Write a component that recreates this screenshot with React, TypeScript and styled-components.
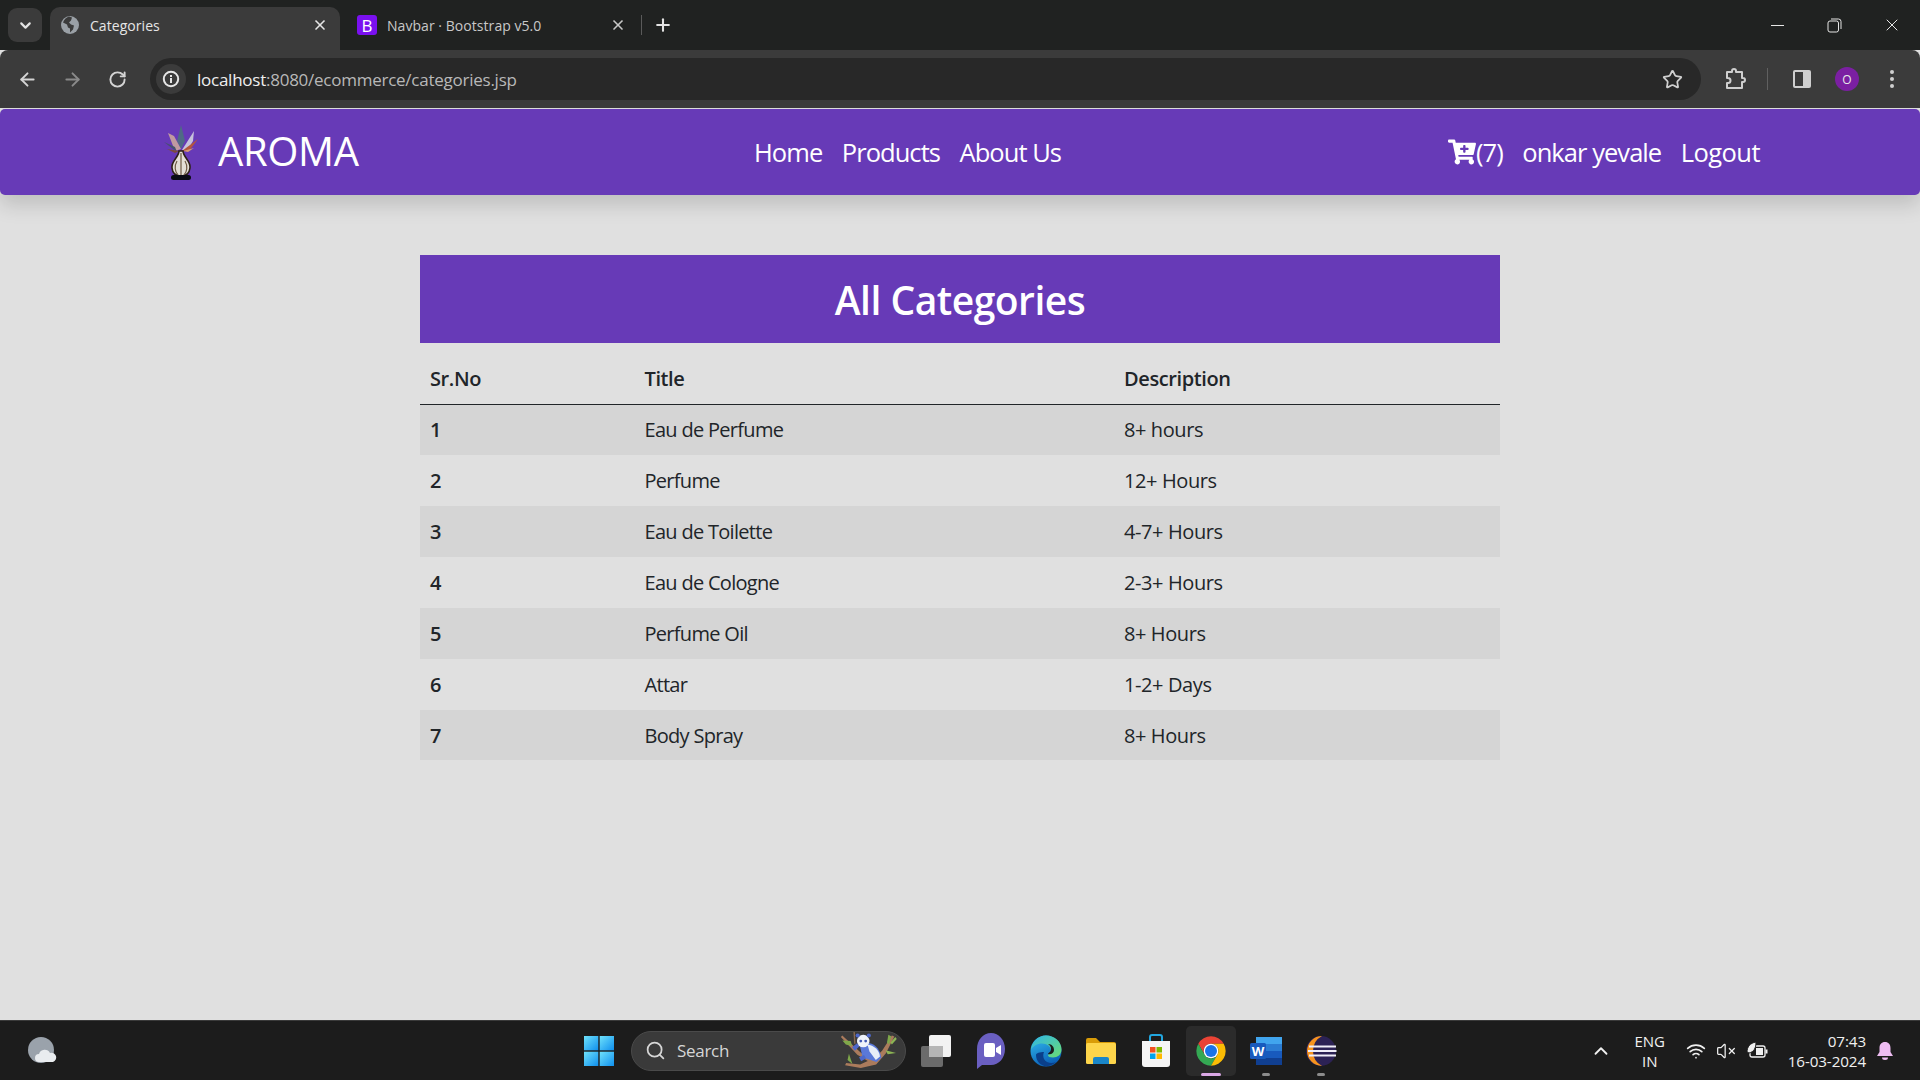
import React from 'react';
import styled, { createGlobalStyle } from 'styled-components';
import { FaCartPlus } from 'react-icons/fa';
import {
  ArrowLeft,
  ArrowRight,
  ChevronDown,
  ChevronUp,
  Plus,
  RotateCw,
  Search,
  Star,
  VolumeX,
  Wifi,
  X,
} from 'lucide-react';

const categories = [
  { id: 1, title: 'Eau de Perfume', description: '8+ hours' },
  { id: 2, title: 'Perfume', description: '12+ Hours' },
  { id: 3, title: 'Eau de Toilette', description: '4-7+ Hours' },
  { id: 4, title: 'Eau de Cologne', description: '2-3+ Hours' },
  { id: 5, title: 'Perfume Oil', description: '8+ Hours' },
  { id: 6, title: 'Attar', description: '1-2+ Days' },
  { id: 7, title: 'Body Spray', description: '8+ Hours' },
];

const GlobalStyle = createGlobalStyle`
  html, body {
    margin: 0;
    padding: 0;
    height: 100%;
    background: #e0e0e0;
    overflow: hidden;
  }
  * {
    box-sizing: border-box;
  }
  body {
    font-family: "Open Sans", "Noto Sans", "Liberation Sans", sans-serif;
  }
`;

const Screen = styled.div`
  display: flex;
  flex-direction: column;
  width: 1920px;
  height: 1080px;
`;

/* browser chrome */
const TabStrip = styled.div`
  display: flex;
  align-items: flex-end;
  height: 50px;
  background: #202221;
  padding-left: 8px;
  flex-shrink: 0;
`;

const TabSearch = styled.div`
  display: flex;
  align-items: center;
  justify-content: center;
  width: 34px;
  height: 34px;
  margin-bottom: 8px;
  border-radius: 9px;
  background: #3b3b3b;
  color: #e3e3e3;
`;

const Tab = styled.div<{ $active?: boolean }>`
  display: flex;
  align-items: center;
  width: ${(p) => (p.$active ? '290px' : '301px')};
  height: 43px;
  margin-left: ${(p) => (p.$active ? '8px' : '0')};
  padding: ${(p) => (p.$active ? '0 12px 7px 10px' : '0 15px 7px 17px')};
  border-radius: 10px 10px 0 0;
  background: ${(p) => (p.$active ? '#3b3b3b' : 'transparent')};
  color: ${(p) => (p.$active ? '#e6e6e6' : '#c8c8c8')};
`;

const TabFavicon = styled.div`
  display: flex;
  width: 20px;
  height: 20px;
  margin-right: 10px;
  flex-shrink: 0;
`;

const BootstrapMark = styled.div`
  display: flex;
  align-items: center;
  justify-content: center;
  width: 20px;
  height: 20px;
  border-radius: 3px;
  background: #7a10f0;
  color: #fff;
  font-size: 17px;
  font-weight: 400;
`;

const TabTitle = styled.span`
  flex: 1;
  font-size: 14px;
  letter-spacing: 0.05px;
  white-space: nowrap;
`;

const TabDivider = styled.div`
  width: 1px;
  height: 20px;
  margin: 0 11px 15px 0;
  background: #5a5a5a;
`;

const NewTab = styled.div`
  display: flex;
  height: 43px;
  align-items: center;
  padding-bottom: 7px;
  color: #e3e3e3;
`;

const WindowControls = styled.div`
  display: flex;
  align-items: center;
  margin-left: auto;
  height: 50px;
  color: #e6e6e6;
`;

const WindowButton = styled.div`
  display: flex;
  align-items: center;
  justify-content: center;
  width: 57px;
  height: 50px;
`;

const MinimizeBar = styled.div`
  width: 13px;
  height: 1px;
  background: #e6e6e6;
`;

const Toolbar = styled.div`
  display: flex;
  align-items: center;
  height: 58px;
  padding: 0 0 0 9px;
  border-radius: 8px 8px 0 0;
  background: #3b3b3b;
  flex-shrink: 0;
`;

const NavIcon = styled.div<{ $dim?: boolean }>`
  display: flex;
  align-items: center;
  justify-content: center;
  width: 36px;
  height: 36px;
  margin-right: 9px;
  color: ${(p) => (p.$dim ? '#8a8a8a' : '#d4d4d4')};
`;

const Omnibox = styled.div`
  display: flex;
  align-items: center;
  width: 1551px;
  height: 42px;
  margin-left: 6px;
  padding: 0 18px 0 6px;
  border-radius: 21px;
  background: #282828;
`;

const InfoChip = styled.div`
  display: flex;
  align-items: center;
  justify-content: center;
  width: 30px;
  height: 30px;
  border-radius: 50%;
  background: #3b3b3b;
`;

const Url = styled.div`
  flex: 1;
  margin-left: 11px;
  font-size: 17px;
  letter-spacing: -0.25px;
  color: #b8b8b8;
`;

const UrlHost = styled.span`
  color: #efefef;
`;

const ToolbarRight = styled.div`
  display: flex;
  align-items: center;
  margin-left: 22px;
  color: #cfcfcf;
`;

const ToolbarSeparator = styled.div`
  width: 1px;
  height: 22px;
  margin: 0 24px 0 20px;
  background: #606060;
`;

const Avatar = styled.div`
  display: flex;
  align-items: center;
  justify-content: center;
  width: 24px;
  height: 24px;
  margin-left: 23px;
  border-radius: 50%;
  background: #7b1fa2;
  color: #e8e8e8;
  font-size: 12px;
`;

const MenuDots = styled.div`
  display: flex;
  flex-direction: column;
  gap: 3px;
  margin-left: 31px;
`;

const Dot = styled.div`
  width: 4px;
  height: 4px;
  border-radius: 50%;
  background: #cfcfcf;
`;

/* page */
const Page = styled.div`
  flex: 1;
  background: #e0e0e0;
  padding-top: 1px;
`;

const Navbar = styled.nav`
  display: grid;
  grid-template-columns: 754px 1fr auto;
  align-items: center;
  height: 86px;
  padding-right: 160px;
  border-radius: 5px;
  background: #673ab7;
  box-shadow: 0 10px 20px rgba(0, 0, 0, 0.15);
  color: #fff;
`;

const Brand = styled.div`
  display: flex;
  align-items: center;
  padding-left: 163px;
`;

const BrandName = styled.span`
  margin-left: 19px;
  margin-top: -4px;
  font-size: 40px;
  letter-spacing: -0.35px;
`;

const NavLinks = styled.div`
  display: flex;
  align-items: center;
  gap: 19.5px;
`;

const NavLink = styled.span`
  font-size: 25.5px;
  letter-spacing: -0.95px;
  white-space: nowrap;
`;

const LogoutLink = styled(NavLink)`
  letter-spacing: -0.55px;
`;

const CartLink = styled(NavLink)`
  display: flex;
  align-items: center;
`;

const Content = styled.main`
  width: 1080px;
  margin: 60px auto 0;
`;

const Heading = styled.h1`
  display: flex;
  align-items: center;
  justify-content: center;
  height: 88px;
  margin: 0;
  background: #673ab7;
  color: #fff;
  font-size: 39px;
  font-weight: 600;
  letter-spacing: -0.5px;
`;

const Table = styled.table`
  width: 100%;
  border-collapse: collapse;
  table-layout: fixed;
  color: #212529;
  font-size: 20px;
  letter-spacing: -0.4px;
`;

const HeadCell = styled.th<{ $width?: number }>`
  width: ${(p) => (p.$width ? `${p.$width}px` : 'auto')};
  height: 61px;
  padding: 10px 10px 0;
  border-bottom: 1px solid #212529;
  text-align: left;
  font-weight: 600;
`;

const Row = styled.tr<{ $striped?: boolean }>`
  background: ${(p) => (p.$striped ? '#d5d5d5' : 'transparent')};

  &:last-child td {
    height: 50px;
  }
`;

const Cell = styled.td`
  height: 51px;
  padding: 0 10px;
  font-weight: 400;
`;

const NumberCell = styled(Cell)`
  font-weight: 600;
`;

const TitleCell = styled(Cell)`
  letter-spacing: -0.7px;
`;

/* windows taskbar */
const Taskbar = styled.footer`
  display: grid;
  grid-template-columns: 574px 1fr auto;
  align-items: center;
  height: 60px;
  border-top: 1px solid #3a3a3a;
  background: #1c1c1c;
  flex-shrink: 0;
`;

const WeatherSlot = styled.div`
  display: flex;
  padding-left: 28px;
`;

const TaskCenter = styled.div`
  display: flex;
  align-items: center;
  gap: 5px;
`;

const TaskSlot = styled.div<{ $active?: boolean }>`
  position: relative;
  display: flex;
  align-items: center;
  justify-content: center;
  width: 50px;
  height: 50px;
  border-radius: 5px;
  background: ${(p) => (p.$active ? '#2b2b2b' : 'transparent')};
`;

const RunningMark = styled.div<{ $active?: boolean }>`
  position: absolute;
  bottom: 0;
  left: 50%;
  width: ${(p) => (p.$active ? '20px' : '8px')};
  height: 3px;
  border-radius: 2px;
  transform: translateX(-50%);
  background: ${(p) => (p.$active ? '#dba8e6' : '#8c8c8c')};
`;

const SearchPill = styled.div`
  display: flex;
  align-items: center;
  width: 275px;
  height: 40px;
  margin: 0 0 0 2px;
  padding: 0 7px 0 13px;
  border-radius: 20px;
  border: 1px solid #4a4a4a;
  background: #3a3a3a;
  color: #d6d6d6;
`;

const SearchLabel = styled.span`
  flex: 1;
  margin-left: 11px;
  font-size: 17px;
  letter-spacing: -0.3px;
`;

const Tray = styled.div`
  display: flex;
  align-items: center;
  padding-right: 26px;
  color: #f0f0f0;
`;

const Lang = styled.div`
  display: flex;
  flex-direction: column;
  align-items: center;
  width: 40px;
  margin: 0 16px 0 18px;
  font-size: 15px;
  line-height: 20px;
`;

const TrayIcons = styled.div`
  display: flex;
  align-items: center;
  gap: 10px;
`;

const Clock = styled.div`
  display: flex;
  flex-direction: column;
  align-items: flex-end;
  margin: 0 10px 0 20px;
  font-size: 15.2px;
  line-height: 20px;
  letter-spacing: -0.1px;
`;

const GlobeIcon = () => (
  <svg width="20" height="20" viewBox="0 0 20 20">
    <circle cx="10" cy="10" r="9" fill="#9aa0a6" />
    <path d="M9 1.5c-3 1-5 3-6 6l4 2 1 3 2 1 0 4 3-3 1-4-3-1-2-2 2-2 1-3z" fill="#3b3b3b" />
  </svg>
);

const InfoIcon = () => (
  <svg width="18" height="18" viewBox="0 0 18 18" fill="none">
    <circle cx="9" cy="9" r="7.2" stroke="#e6e6e6" strokeWidth="2" />
    <rect x="8" y="8" width="2" height="5" fill="#e6e6e6" />
    <rect x="8" y="5" width="2" height="2" fill="#e6e6e6" />
  </svg>
);

const RestoreIcon = () => (
  <svg width="15" height="15" viewBox="0 0 15 15" fill="none" stroke="#e6e6e6" strokeWidth="1">
    <rect x="1" y="3" width="10.5" height="11" rx="2" />
    <path d="M4 1h7.5a2.5 2.5 0 0 1 2.5 2.5V11" />
  </svg>
);

const PuzzleIcon = () => (
  <svg width="24" height="24" viewBox="0 0 24 24" fill="none" stroke="#cfcfcf" strokeWidth="2" strokeLinejoin="round">
    <path d="M4 5h5V4a2 2 0 0 1 4 0v1h6v6h1a2 2 0 0 1 0 4h-1v6H4v-5h1a2.5 2.5 0 0 0 0-5H4z" />
  </svg>
);

const SidePanelIcon = () => (
  <svg width="20" height="20" viewBox="0 0 20 20">
    <rect x="1" y="1" width="18" height="18" rx="2" fill="#cfcfcf" />
    <rect x="3" y="3" width="8" height="14" fill="#3b3b3b" />
  </svg>
);

const VaseLogo = () => (
  <svg width="36" height="58" viewBox="0 0 36 58">
    <path d="M18 2l-4 16 4 8 4-8z" fill="#4f6a85" />
    <path d="M5 10l7 18 6-2-7-13z" fill="#c09aa0" />
    <path d="M31 8l-12 19 5 1 6-10z" fill="#c7c2dc" />
    <path d="M1 19l13 10-2-5z" fill="#45526e" />
    <path d="M35 16l-16 12 7 0z" fill="#b5563c" />
    <path d="M4 26l12 2-4 2z" fill="#7d4b3d" />
    <path d="M31 25l-11 3 5 1z" fill="#d49a74" />
    <path d="M16 28h4c0 6 8 10 7 17-.6 5-4 8-9 8s-8.500-3-9-8c-1-7 7-11 7-17z" fill="#e4dfd6" stroke="#2e2018" strokeWidth="1.600" />
    <path d="M18 30v22M14 38c-3 5-2 11 1 14M22 38c3 5 2 11-1 14" stroke="#6f5a44" strokeWidth="1.200" fill="none" />
    <rect x="8" y="52" width="20" height="5" rx="2.500" fill="#0b0b14" />
  </svg>
);

const WeatherIcon = () => (
  <svg width="30" height="28" viewBox="0 0 30 28">
    <circle cx="13" cy="13" r="13" fill="#9aa2ab" />
    <path d="M11 25a4 4 0 0 1 0-8 6 6 0 0 1 11-1 4.500 4.500 0 0 1 3 9z" fill="#e9ecef" />
  </svg>
);

const StartIcon = () => (
  <svg width="30" height="30" viewBox="0 0 30 30">
    <defs>
      <linearGradient id="startFill" x1="0" y1="0" x2="1" y2="1">
        <stop offset="0" stopColor="#6fe2fb" />
        <stop offset="1" stopColor="#0f8fee" />
      </linearGradient>
    </defs>
    <rect x="0" y="0" width="14.300" height="14.300" fill="url(#startFill)" />
    <rect x="15.700" y="0" width="14.300" height="14.300" fill="url(#startFill)" />
    <rect x="0" y="15.700" width="14.300" height="14.300" fill="url(#startFill)" />
    <rect x="15.700" y="15.700" width="14.300" height="14.300" fill="url(#startFill)" />
  </svg>
);

const PandaArt = () => (
  <svg width="58" height="37" viewBox="0 0 165 106">
    <path d="M38 0l4 0 2 34-4 0z" fill="#8a6a50" />
    <path d="M6 10l54 50 34 18 26-24 28-44 7 3-24 48-28 32-44 10-45-8 3-6 40 4 22-10-30-18L2 14z" fill="#ab7b5c" />
    <path d="M6 24l24 2 4 14-18-4z" fill="#7fa84a" />
    <path d="M25 62l10 30-14-12z" fill="#7fa84a" />
    <path d="M138 8l8 4-6 24-6-6z" fill="#7fa84a" />
    <path d="M158 14l4 6-14 16-4-6z" fill="#8db554" />
    <path d="M130 52l30 8-24 4z" fill="#8db554" />
    <path d="M56 38c20-16 56-4 62 36l-14 12-40-14z" fill="#5a78d8" />
    <path d="M78 36c18 2 34 16 36 34l-12 10-18-24z" fill="#e8eef8" />
    <path d="M54 72l14-6 6 10-14 8z" fill="#4e68c8" />
    <path d="M34 44l14-12 8 8-14 14z" fill="#4e68c8" />
    <circle cx="66" cy="26" r="18" fill="#eef2fa" />
    <circle cx="50" cy="10" r="6" fill="#4e68c8" />
    <circle cx="82" cy="10" r="6" fill="#4e68c8" />
    <circle cx="59" cy="26" r="4" fill="#4058b4" />
    <circle cx="73" cy="26" r="4" fill="#4058b4" />
  </svg>
);

const TaskViewIcon = () => (
  <svg width="32" height="34" viewBox="0 0 32 34">
    <rect x="9" y="1" width="22" height="22" rx="2" fill="#f2f2f2" />
    <rect x="1" y="12" width="22" height="21" rx="2" fill="#6b6b6b" />
    <rect x="9" y="12" width="14" height="11" fill="#b5b5b5" />
  </svg>
);

const MeetIcon = () => (
  <svg width="30" height="38" viewBox="0 0 30 38">
    <path d="M15 1c8 0 14 7 14 16s-6 16-14 16H6l-5 4V17C1 8 7 1 15 1z" fill="#6a5fc1" />
    <rect x="8" y="11" width="11" height="14" rx="2" fill="#fff" />
    <path d="M20 16l5-3v10l-5-3z" fill="#fff" />
  </svg>
);

const EdgeIcon = () => (
  <svg width="32" height="32" viewBox="0 0 32 32">
    <defs>
      <linearGradient id="edgeFill" x1="0" y1="0" x2="0.400" y2="1">
        <stop offset="0" stopColor="#35c1f1" />
        <stop offset="1" stopColor="#0b62b8" />
      </linearGradient>
      <linearGradient id="edgeTop" x1="0" y1="0" x2="1" y2="1">
        <stop offset="0" stopColor="#2fb6e8" />
        <stop offset="1" stopColor="#6bdc72" />
      </linearGradient>
    </defs>
    <circle cx="16" cy="16" r="15.500" fill="url(#edgeFill)" />
    <path d="M16 .5c9 0 15.500 6.500 15.500 14 0 5-4 8-8.500 8-3 0-5-1-5-2 0-1.500 3-1.500 3-5 0-4-4-7-9-7S3 11 1 15C2 7 8 .5 16 .5z" fill="url(#edgeTop)" />
    <path d="M6 20c0 7 6 12 12 11 3-.5 6-2 8-4-4 2-10 1-12-3-1-2-1-5 0-7-4 0-8 1-8 3z" fill="#0a3f8a" />
    <path d="M18 19c0-1 3-2 3-5 0-2-1-4-3-5 4 0 6 3 6 6 0 3-3 5-6 4z" fill="#1c1c1c" />
  </svg>
);

const FolderIcon = () => (
  <svg width="32" height="28" viewBox="0 0 32 28">
    <path d="M1 3a2 2 0 0 1 2-2h8l4 4h14a2 2 0 0 1 2 2v4H1z" fill="#d99c08" />
    <rect x="1" y="6" width="30" height="21" rx="1.500" fill="#fdd54b" />
    <path d="M10 20h12a2 2 0 0 1 2 2v5H8v-5a2 2 0 0 1 2-2z" fill="#1a86c8" />
  </svg>
);

const StoreIcon = () => (
  <svg width="30" height="34" viewBox="0 0 30 34">
    <path d="M9 7V3a2 2 0 0 1 2-2h8a2 2 0 0 1 2 2v4" fill="none" stroke="#22a7e0" strokeWidth="2" />
    <path d="M1 7h28v23a3 3 0 0 1-3 3H4a3 3 0 0 1-3-3z" fill="#f5f5f5" />
    <rect x="9" y="13" width="5.500" height="5.500" fill="#f25022" />
    <rect x="15.500" y="13" width="5.500" height="5.500" fill="#7fba00" />
    <rect x="9" y="19.500" width="5.500" height="5.500" fill="#00a4ef" />
    <rect x="15.500" y="19.500" width="5.500" height="5.500" fill="#ffb900" />
  </svg>
);

const ChromeIcon = () => (
  <svg width="32" height="32" viewBox="0 0 48 48">
    <path d="M4.950 13A22 22 0 0 1 43.050 13H24A11 11 0 0 0 14.470 29.500Z" fill="#ea4335" />
    <path d="M4.950 13A22 22 0 0 0 24 46L33.530 29.500A11 11 0 0 1 14.470 29.500Z" fill="#34a853" />
    <path d="M43.050 13A22 22 0 0 1 24 46L33.530 29.500A11 11 0 0 0 24 13Z" fill="#fbbc04" />
    <circle cx="24" cy="24" r="11" fill="#fff" />
    <circle cx="24" cy="24" r="9" fill="#1a73e8" />
  </svg>
);

const WordIcon = () => (
  <svg width="32" height="30" viewBox="0 0 32 30">
    <rect x="6" y="1" width="26" height="28" rx="1.500" fill="#2b7cd3" />
    <rect x="6" y="1" width="26" height="7" fill="#41a5ee" />
    <rect x="6" y="15" width="26" height="7" fill="#185abd" />
    <rect x="6" y="22" width="26" height="7" fill="#103f91" />
    <rect x="0" y="7" width="16" height="16" rx="1.500" fill="#185abd" />
    <text x="8" y="20" textAnchor="middle" fontSize="13" fontWeight="700" fill="#fff" fontFamily="Open Sans, sans-serif">W</text>
  </svg>
);

const EclipseIcon = () => (
  <svg width="32" height="32" viewBox="0 0 32 32">
    <circle cx="16" cy="16" r="15" fill="#2c2255" />
    <path d="M17 1A15 15 0 0 0 17 31 17 17 0 0 1 17 1z" fill="#f7941e" />
    <rect x="4" y="10.500" width="27" height="2" fill="#f0eef8" />
    <rect x="3" y="15" width="28.500" height="2" fill="#f0eef8" />
    <rect x="4" y="19.500" width="27" height="2" fill="#f0eef8" />
  </svg>
);

const BatteryLeafIcon = () => (
  <svg width="22" height="20" viewBox="0 0 22 20" fill="none">
    <rect x="4" y="5" width="15" height="11" rx="2" stroke="#f0f0f0" strokeWidth="1.300" />
    <rect x="19.500" y="8.500" width="2" height="4" fill="#f0f0f0" />
    <rect x="10" y="7" width="7" height="7" fill="#f0f0f0" />
    <path d="M1 11C1 6 4 2 10 1c0 6-2 10-7 11z" fill="#f0f0f0" stroke="#1c1c1c" />
  </svg>
);

const BellIcon = () => (
  <svg width="18" height="20" viewBox="0 0 18 20">
    <path d="M9 1c3.500 0 5.500 2.500 5.500 6v4l2.500 4H1l2.500-4V7C3.500 3.500 5.500 1 9 1z" fill="#eebcf2" />
    <path d="M6 16.500h6a3 2.500 0 0 1-6 0z" fill="#eebcf2" />
  </svg>
);

const App = () => {
  return (
    <Screen>
      <GlobalStyle />
      <TabStrip>
        <TabSearch>
          <ChevronDown size={17} strokeWidth={3} />
        </TabSearch>
        <Tab $active>
          <TabFavicon>
            <GlobeIcon />
          </TabFavicon>
          <TabTitle>Categories</TabTitle>
          <X size={16} strokeWidth={2.5} />
        </Tab>
        <Tab>
          <TabFavicon>
            <BootstrapMark>B</BootstrapMark>
          </TabFavicon>
          <TabTitle>Navbar · Bootstrap v5.0</TabTitle>
          <X size={16} strokeWidth={2.5} />
        </Tab>
        <TabDivider />
        <NewTab>
          <Plus size={20} strokeWidth={2.5} />
        </NewTab>
        <WindowControls>
          <WindowButton>
            <MinimizeBar />
          </WindowButton>
          <WindowButton>
            <RestoreIcon />
          </WindowButton>
          <WindowButton>
            <X size={20} strokeWidth={1.2} />
          </WindowButton>
        </WindowControls>
      </TabStrip>

      <Toolbar>
        <NavIcon>
          <ArrowLeft size={21} strokeWidth={2.2} />
        </NavIcon>
        <NavIcon $dim>
          <ArrowRight size={21} strokeWidth={2.2} />
        </NavIcon>
        <NavIcon>
          <RotateCw size={19} strokeWidth={2.4} />
        </NavIcon>
        <Omnibox>
          <InfoChip>
            <InfoIcon />
          </InfoChip>
          <Url>
            <UrlHost>localhost</UrlHost>:8080/ecommerce/categories.jsp
          </Url>
          <Star size={21} strokeWidth={2} color="#d0d0d0" />
        </Omnibox>
        <ToolbarRight>
          <PuzzleIcon />
          <ToolbarSeparator />
          <SidePanelIcon />
          <Avatar>O</Avatar>
          <MenuDots>
            <Dot />
            <Dot />
            <Dot />
          </MenuDots>
        </ToolbarRight>
      </Toolbar>

      <Page>
        <Navbar>
          <Brand>
            <VaseLogo />
            <BrandName>AROMA</BrandName>
          </Brand>
          <NavLinks>
            <NavLink>Home</NavLink>
            <NavLink>Products</NavLink>
            <NavLink>About Us</NavLink>
          </NavLinks>
          <NavLinks>
            <CartLink>
              <FaCartPlus size={28} />
              (7)
            </CartLink>
            <NavLink>onkar yevale</NavLink>
            <LogoutLink>Logout</LogoutLink>
          </NavLinks>
        </Navbar>

        <Content>
          <Heading>All Categories</Heading>
          <Table>
            <thead>
              <tr>
                <HeadCell $width={214.5}>Sr.No</HeadCell>
                <HeadCell $width={479.5}>Title</HeadCell>
                <HeadCell>Description</HeadCell>
              </tr>
            </thead>
            <tbody>
              {categories.map((c) => (
                <Row key={c.id} $striped={c.id % 2 === 1}>
                  <NumberCell>{c.id}</NumberCell>
                  <TitleCell>{c.title}</TitleCell>
                  <Cell>{c.description}</Cell>
                </Row>
              ))}
            </tbody>
          </Table>
        </Content>
      </Page>

      <Taskbar>
        <WeatherSlot>
          <WeatherIcon />
        </WeatherSlot>
        <TaskCenter>
          <TaskSlot>
            <StartIcon />
          </TaskSlot>
          <SearchPill>
            <Search size={21} strokeWidth={2} />
            <SearchLabel>Search</SearchLabel>
            <PandaArt />
          </SearchPill>
          <TaskSlot>
            <TaskViewIcon />
          </TaskSlot>
          <TaskSlot>
            <MeetIcon />
          </TaskSlot>
          <TaskSlot>
            <EdgeIcon />
          </TaskSlot>
          <TaskSlot>
            <FolderIcon />
          </TaskSlot>
          <TaskSlot>
            <StoreIcon />
          </TaskSlot>
          <TaskSlot $active>
            <ChromeIcon />
            <RunningMark $active />
          </TaskSlot>
          <TaskSlot>
            <WordIcon />
            <RunningMark />
          </TaskSlot>
          <TaskSlot>
            <EclipseIcon />
            <RunningMark />
          </TaskSlot>
        </TaskCenter>
        <Tray>
          <ChevronUp size={22} strokeWidth={2} />
          <Lang>
            <span>ENG</span>
            <span>IN</span>
          </Lang>
          <TrayIcons>
            <Wifi size={20} strokeWidth={2} />
            <VolumeX size={20} strokeWidth={1.5} />
            <BatteryLeafIcon />
          </TrayIcons>
          <Clock>
            <span>07:43</span>
            <span>16-03-2024</span>
          </Clock>
          <BellIcon />
        </Tray>
      </Taskbar>
    </Screen>
  );
};

export default App;
